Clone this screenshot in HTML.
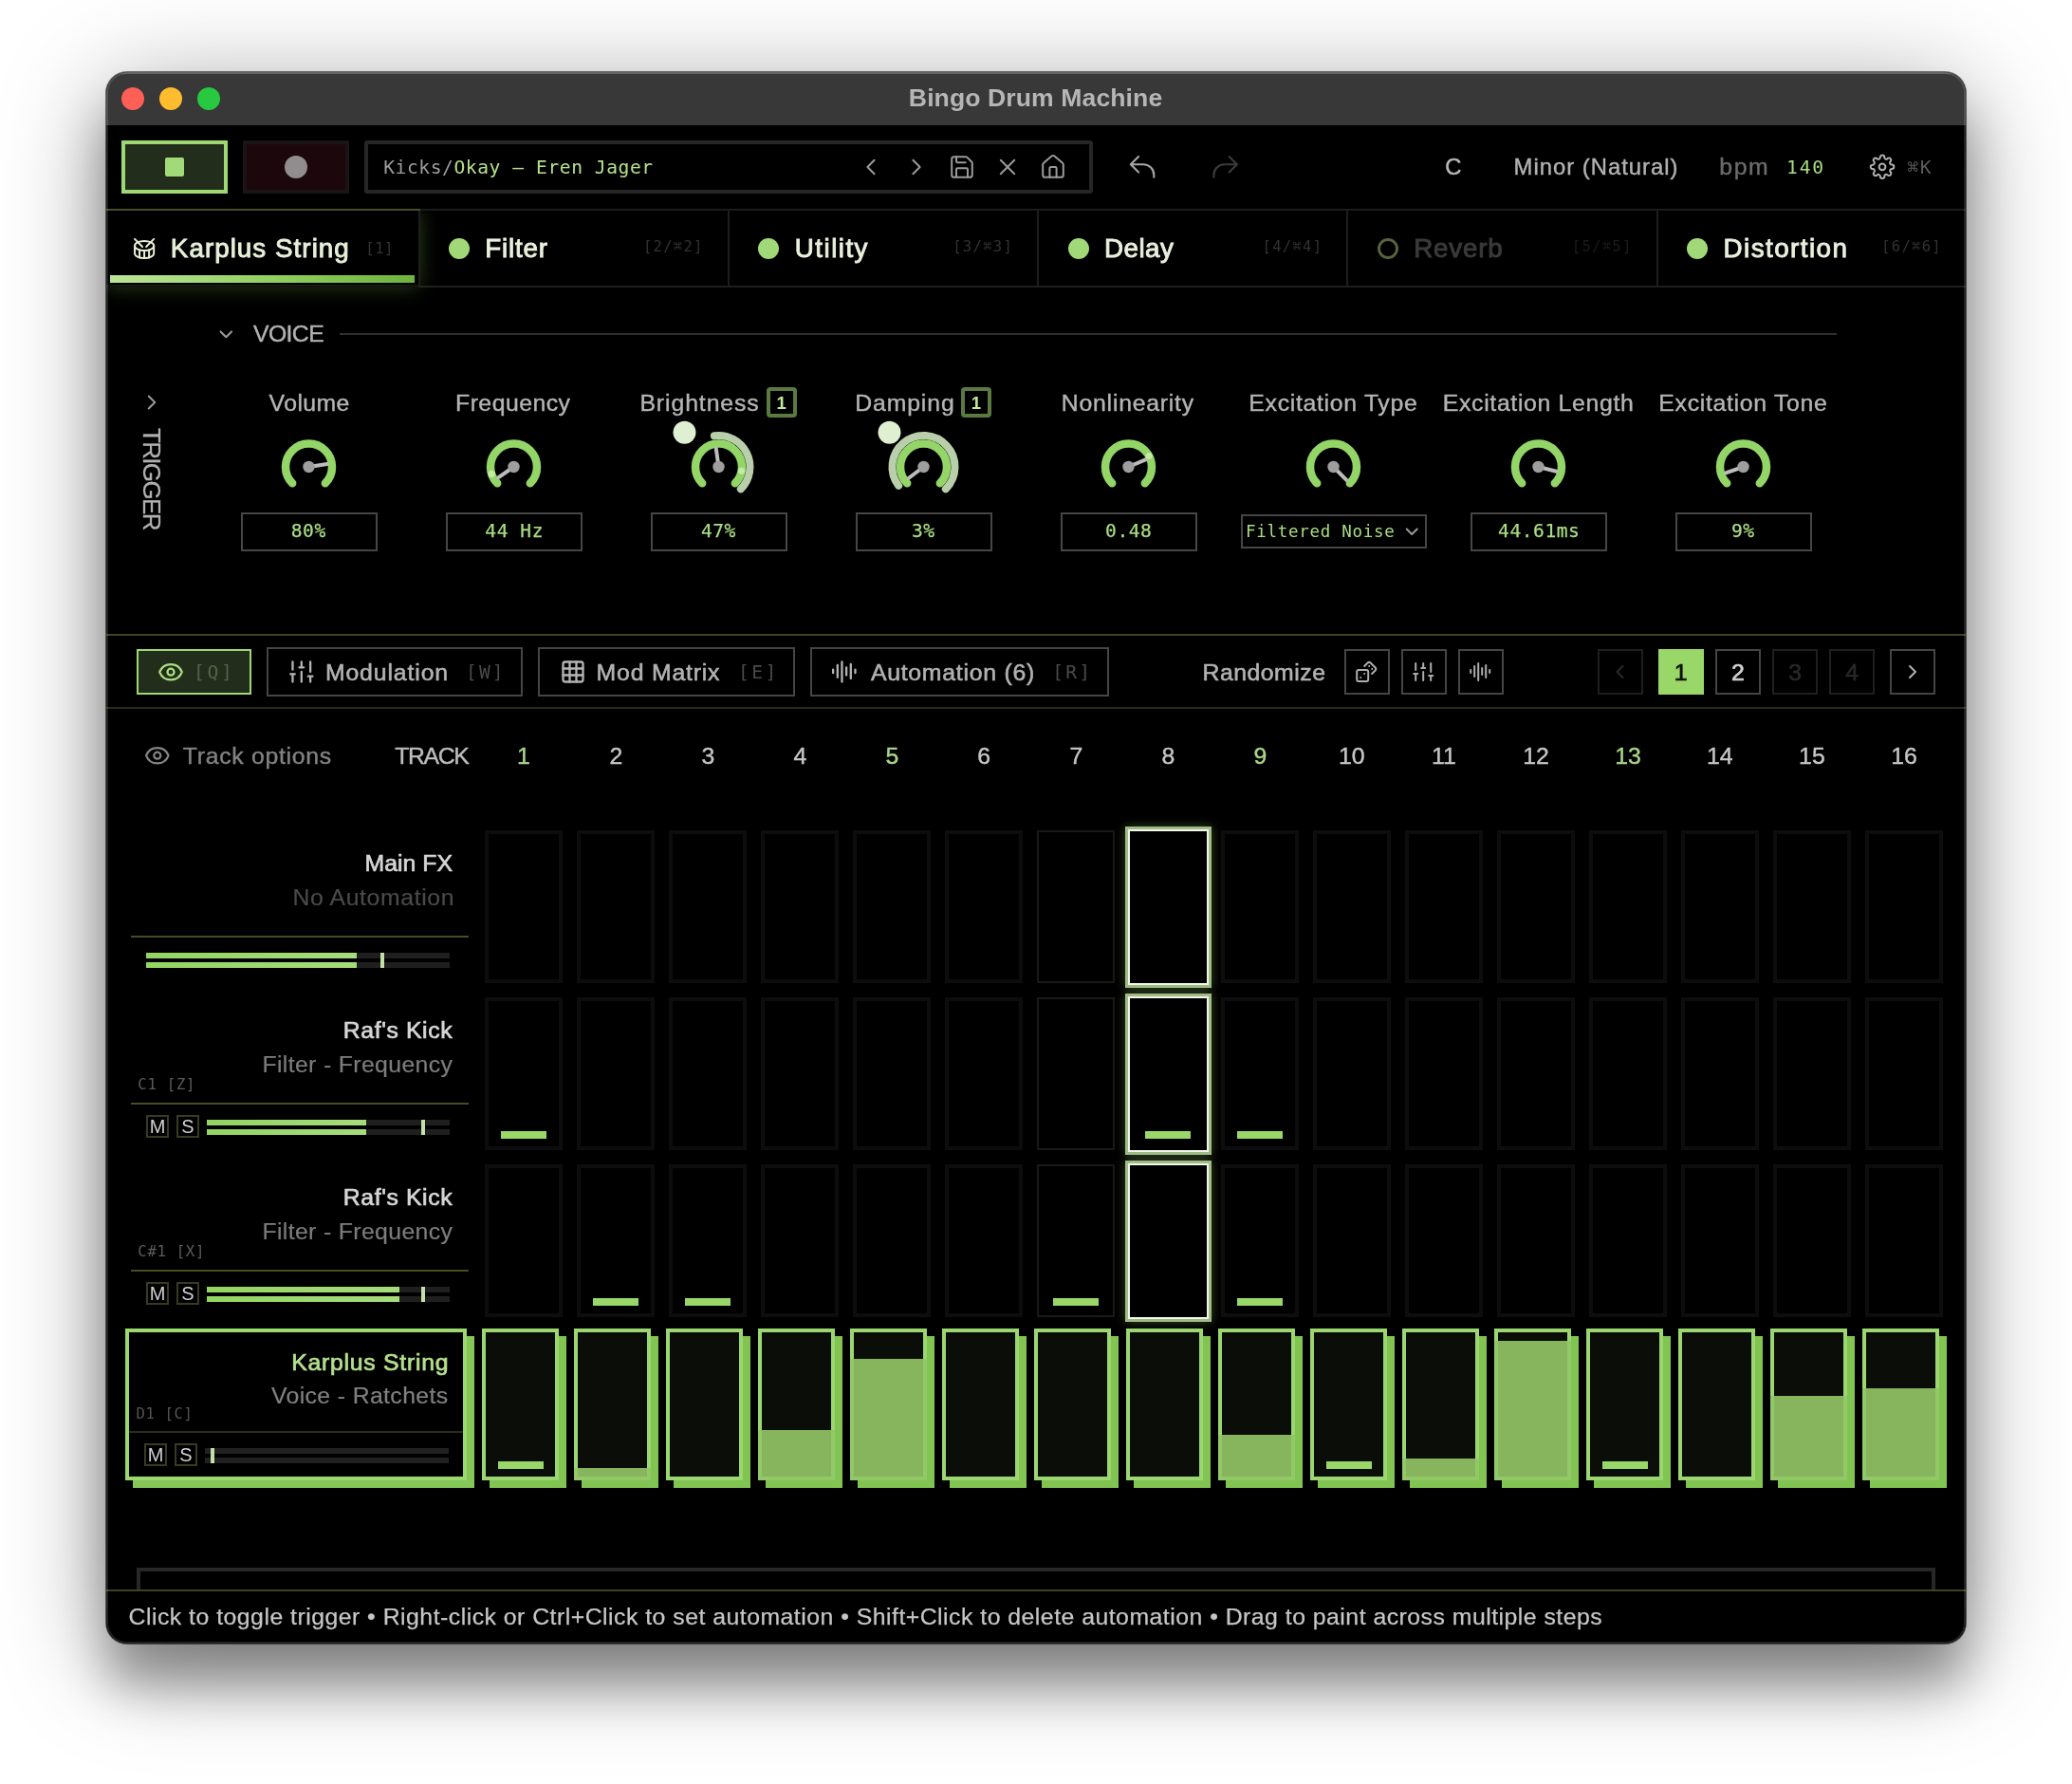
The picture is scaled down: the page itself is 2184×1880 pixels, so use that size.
<!DOCTYPE html>
<html lang="en"><head><meta charset="utf-8"><title>Bingo Drum Machine</title>
<style>
html,body{margin:0;padding:0;background:#fff;}
body{width:2184px;height:1880px;position:relative;overflow:hidden;}
#win{position:absolute;left:112px;top:76px;width:1960px;height:1656px;background:#000;border-radius:22px;box-shadow:0 0 0 1px rgba(0,0,0,.55),0 45px 50px rgba(0,0,0,.3),0 20px 110px rgba(0,0,0,.4);}
#clip{will-change:transform;position:absolute;left:0;top:0;width:1960px;height:1656px;border-radius:22px;overflow:hidden;}
#rim{position:absolute;left:0;top:0;width:1960px;height:1656px;border-radius:22px;box-shadow:inset 0 0 0 2px rgba(255,255,255,.13);pointer-events:none;}
.t{position:absolute;white-space:pre;margin:0;}
.b{position:absolute;}
svg.ov{position:absolute;left:0;top:0;}
</style></head>
<body>
<div id="win"><div id="clip">
<div class="b" style="left:0.00px;top:0.00px;width:1960.00px;height:56.00px;background:#383838;border-top:2px solid #4e4e4e;box-sizing:border-box;"></div>
<div class="b" style="left:16.00px;top:16.00px;width:24.00px;height:24.00px;background:#fe5f57;border-radius:50%;"></div>
<div class="b" style="left:56.00px;top:16.00px;width:24.00px;height:24.00px;background:#febc2e;border-radius:50%;"></div>
<div class="b" style="left:96.00px;top:16.00px;width:24.00px;height:24.00px;background:#28c840;border-radius:50%;"></div>
<div class="t" style='left:845.87px;top:14.00px;font:700 26.60px/26.60px "Liberation Sans",sans-serif;color:#b6b6b6;letter-spacing:0.082px;'>Bingo Drum Machine</div>
<div class="b" style="left:16.00px;top:72.00px;width:112.00px;height:56.00px;background:#232d1b;border:4px solid #9dd873;box-sizing:border-box;"></div>
<div class="b" style="left:62.00px;top:90.00px;width:20.00px;height:20.00px;background:#a3da79;border-radius:2px;"></div>
<div class="b" style="left:144.00px;top:72.00px;width:112.00px;height:56.00px;background:#1b070c;border:4px solid #1a1416;box-sizing:border-box;"></div>
<div class="b" style="left:188.00px;top:88.00px;width:24.00px;height:24.00px;background:#918d8f;border-radius:50%;"></div>
<div class="b" style="left:272.00px;top:72.00px;width:768.00px;height:56.00px;border:4px solid #262626;box-sizing:border-box;border-radius:3px;"></div>
<div class="t" style='left:292.23px;top:91.00px;font:400 19.60px/19.60px "DejaVu Sans Mono","Liberation Mono",monospace;color:#b5e18c;letter-spacing:0.573px;'><span style="color:#9c9c9c">Kicks/</span>Okay – Eren Jager</div>
<div class="t" style='left:1411.32px;top:88.00px;font:400 23.80px/23.80px "Liberation Sans",sans-serif;color:#b8b8b8;-webkit-text-stroke:0.42px #b8b8b8;'>C</div>
<div class="t" style='left:1483.61px;top:88.00px;font:400 23.80px/23.80px "Liberation Sans",sans-serif;color:#b2b2b2;letter-spacing:1.016px;-webkit-text-stroke:0.42px #b2b2b2;'>Minor (Natural)</div>
<div class="t" style='left:1700.26px;top:88.00px;font:400 24.80px/24.80px "Liberation Sans",sans-serif;color:#6c6c6c;letter-spacing:1.603px;-webkit-text-stroke:0.42px #6c6c6c;'>bpm</div>
<div class="t" style='left:1771.05px;top:91.00px;font:400 19.60px/19.60px "DejaVu Sans Mono","Liberation Mono",monospace;color:#a9dd82;letter-spacing:1.800px;'>140</div>
<div class="t" style='left:1898.26px;top:91.00px;font:400 19.60px/19.60px "DejaVu Sans Mono","Liberation Mono",monospace;color:#5c5c5c;letter-spacing:1.668px;'>⌘K</div>
<div class="b" style="left:0.00px;top:144.00px;width:1960.00px;height:2.00px;background:#1b1b1b;"></div>
<div class="b" style="left:0.00px;top:144.00px;width:330.50px;height:2.00px;background:#454e2f;"></div>
<div class="b" style="left:0.00px;top:224.50px;width:1960.00px;height:2.00px;background:#1d1d1d;"></div>
<div class="b" style="left:0.00px;top:146.00px;width:328.50px;height:78.00px;background:#000;box-shadow:0 1px 20px 0 rgba(135,205,85,.36);clip-path:inset(0 -80px -80px -80px);"></div>
<div class="b" style="left:0.00px;top:224.50px;width:328.50px;height:2.00px;background:#10140c;"></div>
<div class="b" style="left:328.50px;top:146.00px;width:2.00px;height:80.00px;background:#1d1d1d;"></div>
<div class="b" style="left:654.80px;top:146.00px;width:2.00px;height:80.00px;background:#1d1d1d;"></div>
<div class="b" style="left:981.10px;top:146.00px;width:2.00px;height:80.00px;background:#1d1d1d;"></div>
<div class="b" style="left:1307.40px;top:146.00px;width:2.00px;height:80.00px;background:#1d1d1d;"></div>
<div class="b" style="left:1633.70px;top:146.00px;width:2.00px;height:80.00px;background:#1d1d1d;"></div>
<div class="b" style="left:4.00px;top:214.00px;width:321.00px;height:8.00px;background:linear-gradient(90deg,#bde598,#8fcf5f 55%,#6db33e);"></div>
<div class="t" style='left:67.83px;top:172.00px;font:400 27.80px/27.80px "Liberation Sans",sans-serif;color:#e7f1da;letter-spacing:1.029px;-webkit-text-stroke:0.9px #e7f1da;'>Karplus String</div>
<div class="t" style='left:273.36px;top:179.00px;font:400 15.60px/15.60px "DejaVu Sans Mono","Liberation Mono",monospace;color:#343434;letter-spacing:0.479px;'>[1]</div>
<div class="b" style="left:361.10px;top:175.00px;width:22.00px;height:22.00px;background:#a1d979;border-radius:50%;"></div>
<div class="t" style='left:399.33px;top:172.00px;font:400 27.80px/27.80px "Liberation Sans",sans-serif;color:#e9f1de;letter-spacing:0.791px;-webkit-text-stroke:0.9px #e9f1de;'>Filter</div>
<div class="t" style='right:1330.25px;top:177.39px;font:400 15.60px/15.60px "DejaVu Sans Mono","Liberation Mono",monospace;color:#323232;letter-spacing:1.250px;'>[2/⌘2]</div>
<div class="b" style="left:687.40px;top:175.00px;width:22.00px;height:22.00px;background:#a1d979;border-radius:50%;"></div>
<div class="t" style='left:725.76px;top:172.00px;font:400 27.80px/27.80px "Liberation Sans",sans-serif;color:#e9f1de;letter-spacing:1.469px;-webkit-text-stroke:0.9px #e9f1de;'>Utility</div>
<div class="t" style='right:1003.95px;top:177.39px;font:400 15.60px/15.60px "DejaVu Sans Mono","Liberation Mono",monospace;color:#323232;letter-spacing:1.250px;'>[3/⌘3]</div>
<div class="b" style="left:1013.70px;top:175.00px;width:22.00px;height:22.00px;background:#a1d979;border-radius:50%;"></div>
<div class="t" style='left:1051.93px;top:172.00px;font:400 27.80px/27.80px "Liberation Sans",sans-serif;color:#e9f1de;letter-spacing:0.481px;-webkit-text-stroke:0.9px #e9f1de;'>Delay</div>
<div class="t" style='right:677.65px;top:177.39px;font:400 15.60px/15.60px "DejaVu Sans Mono","Liberation Mono",monospace;color:#323232;letter-spacing:1.250px;'>[4/⌘4]</div>
<div class="b" style="left:1340.00px;top:175.00px;width:22.00px;height:22.00px;border:3px solid #56633f;border-radius:50%;box-sizing:border-box;"></div>
<div class="t" style='left:1378.23px;top:172.00px;font:400 27.80px/27.80px "Liberation Sans",sans-serif;color:#3a3a3a;letter-spacing:0.770px;-webkit-text-stroke:0.9px #3a3a3a;filter:blur(0.6px);'>Reverb</div>
<div class="t" style='right:351.35px;top:177.39px;font:400 15.60px/15.60px "DejaVu Sans Mono","Liberation Mono",monospace;color:#1c1c1c;letter-spacing:1.250px;'>[5/⌘5]</div>
<div class="b" style="left:1666.30px;top:175.00px;width:22.00px;height:22.00px;background:#a1d979;border-radius:50%;"></div>
<div class="t" style='left:1704.53px;top:172.00px;font:400 27.80px/27.80px "Liberation Sans",sans-serif;color:#e9f1de;letter-spacing:1.453px;-webkit-text-stroke:0.9px #e9f1de;'>Distortion</div>
<div class="t" style='right:25.05px;top:177.39px;font:400 15.60px/15.60px "DejaVu Sans Mono","Liberation Mono",monospace;color:#323232;letter-spacing:1.250px;'>[6/⌘6]</div>
<div class="t" style='left:154.95px;top:264.00px;font:400 24.80px/24.80px "Liberation Sans",sans-serif;color:#b2b2b2;letter-spacing:-0.598px;-webkit-text-stroke:0.42px #b2b2b2;'>VOICE</div>
<div class="b" style="left:246.00px;top:275.00px;width:1578.00px;height:2.00px;background:#2f2f2f;"></div>
<div class="t" style='left:39.00px;top:375.28px;font:400 26.0px/26.0px "Liberation Sans",sans-serif;color:#b0b0b0;-webkit-text-stroke:0.3px #b0b0b0;letter-spacing:-1.673px;transform-origin:0 0;transform:rotate(90deg) translate(0,-22.01px);'>TRIGGER</div>
<div class="t" style='left:171.60px;top:337.00px;font:400 24.80px/24.80px "Liberation Sans",sans-serif;color:#b4b4b4;letter-spacing:0.418px;-webkit-text-stroke:0.42px #b4b4b4;'>Volume</div>
<div class="b" style="left:141.50px;top:463.50px;width:144.00px;height:41.00px;border:2px solid #464646;box-sizing:border-box;"></div>
<div class="t" style='left:194.78px;top:474.00px;font:400 19.60px/19.60px "DejaVu Sans Mono","Liberation Mono",monospace;color:#a9dd82;letter-spacing:0.541px;-webkit-text-stroke:0.25px #a9dd82;'>80%</div>
<div class="t" style='left:368.03px;top:337.00px;font:400 24.80px/24.80px "Liberation Sans",sans-serif;color:#b4b4b4;letter-spacing:0.473px;-webkit-text-stroke:0.42px #b4b4b4;'>Frequency</div>
<div class="b" style="left:357.50px;top:463.50px;width:144.00px;height:41.00px;border:2px solid #464646;box-sizing:border-box;"></div>
<div class="t" style='left:399.36px;top:474.00px;font:400 19.60px/19.60px "DejaVu Sans Mono","Liberation Mono",monospace;color:#a9dd82;letter-spacing:0.541px;-webkit-text-stroke:0.25px #a9dd82;'>44 Hz</div>
<div class="t" style='left:562.43px;top:337.00px;font:400 24.80px/24.80px "Liberation Sans",sans-serif;color:#b4b4b4;letter-spacing:0.906px;-webkit-text-stroke:0.42px #b4b4b4;'>Brightness</div>
<div class="b" style="left:696.10px;top:332.20px;width:31.50px;height:31.50px;border:4px solid #5b7a40;border-radius:4px;box-sizing:border-box;background:#000;"></div>
<div class="t" style='left:706.52px;top:340.00px;font:700 18.50px/18.50px "Liberation Sans",sans-serif;color:#c4e6a0;'>1</div>
<div class="b" style="left:573.50px;top:463.50px;width:144.00px;height:41.00px;border:2px solid #464646;box-sizing:border-box;"></div>
<div class="t" style='left:626.93px;top:474.00px;font:400 19.60px/19.60px "DejaVu Sans Mono","Liberation Mono",monospace;color:#a9dd82;letter-spacing:0.541px;-webkit-text-stroke:0.25px #a9dd82;'>47%</div>
<div class="t" style='left:789.23px;top:337.00px;font:400 24.80px/24.80px "Liberation Sans",sans-serif;color:#b4b4b4;letter-spacing:0.869px;-webkit-text-stroke:0.42px #b4b4b4;'>Damping</div>
<div class="b" style="left:901.30px;top:332.20px;width:31.50px;height:31.50px;border:4px solid #5b7a40;border-radius:4px;box-sizing:border-box;background:#000;"></div>
<div class="t" style='left:911.72px;top:340.00px;font:700 18.50px/18.50px "Liberation Sans",sans-serif;color:#c4e6a0;'>1</div>
<div class="b" style="left:789.50px;top:463.50px;width:144.00px;height:41.00px;border:2px solid #464646;box-sizing:border-box;"></div>
<div class="t" style='left:848.93px;top:474.00px;font:400 19.60px/19.60px "DejaVu Sans Mono","Liberation Mono",monospace;color:#a9dd82;letter-spacing:0.541px;-webkit-text-stroke:0.25px #a9dd82;'>3%</div>
<div class="t" style='left:1006.83px;top:337.00px;font:400 24.80px/24.80px "Liberation Sans",sans-serif;color:#b4b4b4;letter-spacing:0.765px;-webkit-text-stroke:0.42px #b4b4b4;'>Nonlinearity</div>
<div class="b" style="left:1005.50px;top:463.50px;width:144.00px;height:41.00px;border:2px solid #464646;box-sizing:border-box;"></div>
<div class="t" style='left:1053.10px;top:474.00px;font:400 19.60px/19.60px "DejaVu Sans Mono","Liberation Mono",monospace;color:#a9dd82;letter-spacing:0.541px;-webkit-text-stroke:0.25px #a9dd82;'>0.48</div>
<div class="t" style='left:1204.33px;top:337.00px;font:400 24.80px/24.80px "Liberation Sans",sans-serif;color:#b4b4b4;letter-spacing:0.693px;-webkit-text-stroke:0.42px #b4b4b4;'>Excitation Type</div>
<div class="t" style='left:1408.83px;top:337.00px;font:400 24.80px/24.80px "Liberation Sans",sans-serif;color:#b4b4b4;letter-spacing:0.669px;-webkit-text-stroke:0.42px #b4b4b4;'>Excitation Length</div>
<div class="b" style="left:1437.50px;top:463.50px;width:144.00px;height:41.00px;border:2px solid #464646;box-sizing:border-box;"></div>
<div class="t" style='left:1467.06px;top:474.00px;font:400 19.60px/19.60px "DejaVu Sans Mono","Liberation Mono",monospace;color:#a9dd82;letter-spacing:0.541px;-webkit-text-stroke:0.25px #a9dd82;'>44.61ms</div>
<div class="t" style='left:1636.33px;top:337.00px;font:400 24.80px/24.80px "Liberation Sans",sans-serif;color:#b4b4b4;letter-spacing:0.693px;-webkit-text-stroke:0.42px #b4b4b4;'>Excitation Tone</div>
<div class="b" style="left:1653.50px;top:463.50px;width:144.00px;height:41.00px;border:2px solid #464646;box-sizing:border-box;"></div>
<div class="t" style='left:1712.98px;top:474.00px;font:400 19.60px/19.60px "DejaVu Sans Mono","Liberation Mono",monospace;color:#a9dd82;letter-spacing:0.541px;-webkit-text-stroke:0.25px #a9dd82;'>9%</div>
<div class="b" style="left:1196.00px;top:466.00px;width:196.00px;height:36.00px;border:2px solid #464646;box-sizing:border-box;"></div>
<div class="t" style='left:1200.93px;top:476.00px;font:400 17.50px/17.50px "DejaVu Sans Mono","Liberation Mono",monospace;color:#a9dd82;letter-spacing:0.727px;'>Filtered Noise</div>
<div class="b" style="left:0.00px;top:592.00px;width:1960.00px;height:2.00px;background:#3a4521;"></div>
<div class="b" style="left:0.00px;top:669.00px;width:1960.00px;height:2.00px;background:#262e18;"></div>
<div class="b" style="left:32.00px;top:608.00px;width:121.00px;height:48.00px;background:#232d1b;border:2px solid #9dd873;box-sizing:border-box;"></div>
<div class="t" style='left:91.99px;top:623.00px;font:400 19.60px/19.60px "DejaVu Sans Mono","Liberation Mono",monospace;color:#56634a;letter-spacing:2.746px;'>[Q]</div>
<div class="b" style="left:169.00px;top:606.00px;width:270.00px;height:52.00px;border:2px solid #454545;box-sizing:border-box;"></div>
<div class="t" style='left:230.92px;top:621.00px;font:400 24.80px/24.80px "Liberation Sans",sans-serif;color:#b2b2b2;letter-spacing:0.874px;-webkit-text-stroke:0.6px #b2b2b2;'>Modulation</div>
<div class="t" style='left:378.99px;top:623.00px;font:400 19.60px/19.60px "DejaVu Sans Mono","Liberation Mono",monospace;color:#4a4a4a;letter-spacing:2.096px;'>[W]</div>
<div class="b" style="left:455.00px;top:606.00px;width:271.00px;height:52.00px;border:2px solid #454545;box-sizing:border-box;"></div>
<div class="t" style='left:516.62px;top:621.00px;font:400 24.80px/24.80px "Liberation Sans",sans-serif;color:#b2b2b2;letter-spacing:0.800px;-webkit-text-stroke:0.6px #b2b2b2;'>Mod Matrix</div>
<div class="t" style='left:666.09px;top:623.00px;font:400 19.60px/19.60px "DejaVu Sans Mono","Liberation Mono",monospace;color:#4a4a4a;letter-spacing:2.396px;'>[E]</div>
<div class="b" style="left:742.00px;top:606.00px;width:315.00px;height:52.00px;border:2px solid #454545;box-sizing:border-box;"></div>
<div class="t" style='left:805.90px;top:621.00px;font:400 24.80px/24.80px "Liberation Sans",sans-serif;color:#b2b2b2;letter-spacing:0.743px;-webkit-text-stroke:0.6px #b2b2b2;'>Automation (6)</div>
<div class="t" style='left:997.19px;top:623.00px;font:400 19.60px/19.60px "DejaVu Sans Mono","Liberation Mono",monospace;color:#4a4a4a;letter-spacing:2.296px;'>[R]</div>
<div class="t" style='left:1155.52px;top:621.00px;font:400 24.80px/24.80px "Liberation Sans",sans-serif;color:#b2b2b2;letter-spacing:0.502px;-webkit-text-stroke:0.6px #b2b2b2;'>Randomize</div>
<div class="b" style="left:1305.00px;top:608.00px;width:48.00px;height:48.00px;border:2px solid #454545;box-sizing:border-box;"></div>
<div class="b" style="left:1365.00px;top:608.00px;width:48.00px;height:48.00px;border:2px solid #454545;box-sizing:border-box;"></div>
<div class="b" style="left:1425.00px;top:608.00px;width:48.00px;height:48.00px;border:2px solid #454545;box-sizing:border-box;"></div>
<div class="b" style="left:1572.00px;top:608.00px;width:48.00px;height:48.00px;border:2px solid #1f1f1f;box-sizing:border-box;"></div>
<div class="b" style="left:1636.00px;top:608.00px;width:48.00px;height:48.00px;background:#98d768;"></div>
<div class="t" style='left:1652.78px;top:621.00px;font:400 24.80px/24.80px "Liberation Sans",sans-serif;color:#0c1208;-webkit-text-stroke:0.7px #0c1208;'>1</div>
<div class="b" style="left:1696.00px;top:608.00px;width:48.00px;height:48.00px;border:2px solid #454545;box-sizing:border-box;"></div>
<div class="t" style='left:1713.09px;top:621.00px;font:400 24.80px/24.80px "Liberation Sans",sans-serif;color:#d2d2d2;-webkit-text-stroke:0.7px #d2d2d2;'>2</div>
<div class="b" style="left:1756.00px;top:608.00px;width:48.00px;height:48.00px;border:2px solid #1f1f1f;box-sizing:border-box;"></div>
<div class="t" style='left:1773.18px;top:621.00px;font:400 24.80px/24.80px "Liberation Sans",sans-serif;color:#272727;-webkit-text-stroke:0.7px #272727;'>3</div>
<div class="b" style="left:1816.00px;top:608.00px;width:48.00px;height:48.00px;border:2px solid #1f1f1f;box-sizing:border-box;"></div>
<div class="t" style='left:1833.18px;top:621.00px;font:400 24.80px/24.80px "Liberation Sans",sans-serif;color:#272727;-webkit-text-stroke:0.7px #272727;'>4</div>
<div class="b" style="left:1880.00px;top:608.00px;width:48.00px;height:48.00px;border:2px solid #454545;box-sizing:border-box;"></div>
<div class="t" style='left:80.81px;top:709.00px;font:400 24.80px/24.80px "Liberation Sans",sans-serif;color:#828282;letter-spacing:0.693px;-webkit-text-stroke:0.42px #828282;'>Track options</div>
<div class="t" style='left:304.21px;top:709.00px;font:400 24.80px/24.80px "Liberation Sans",sans-serif;color:#bdbdbd;letter-spacing:-1.337px;-webkit-text-stroke:0.42px #bdbdbd;'>TRACK</div>
<div class="t" style='left:433.08px;top:709.00px;font:400 24.80px/24.80px "Liberation Sans",sans-serif;color:#a9d689;-webkit-text-stroke:0.42px #a9d689;'>1</div>
<div class="t" style='left:530.39px;top:709.00px;font:400 24.80px/24.80px "Liberation Sans",sans-serif;color:#c6c6c6;-webkit-text-stroke:0.42px #c6c6c6;'>2</div>
<div class="t" style='left:627.48px;top:709.00px;font:400 24.80px/24.80px "Liberation Sans",sans-serif;color:#c6c6c6;-webkit-text-stroke:0.42px #c6c6c6;'>3</div>
<div class="t" style='left:724.48px;top:709.00px;font:400 24.80px/24.80px "Liberation Sans",sans-serif;color:#c6c6c6;-webkit-text-stroke:0.42px #c6c6c6;'>4</div>
<div class="t" style='left:821.42px;top:709.00px;font:400 24.80px/24.80px "Liberation Sans",sans-serif;color:#a9d689;-webkit-text-stroke:0.42px #a9d689;'>5</div>
<div class="t" style='left:918.33px;top:709.00px;font:400 24.80px/24.80px "Liberation Sans",sans-serif;color:#c6c6c6;-webkit-text-stroke:0.42px #c6c6c6;'>6</div>
<div class="t" style='left:1015.39px;top:709.00px;font:400 24.80px/24.80px "Liberation Sans",sans-serif;color:#c6c6c6;-webkit-text-stroke:0.42px #c6c6c6;'>7</div>
<div class="t" style='left:1112.39px;top:709.00px;font:400 24.80px/24.80px "Liberation Sans",sans-serif;color:#c6c6c6;-webkit-text-stroke:0.42px #c6c6c6;'>8</div>
<div class="t" style='left:1209.42px;top:709.00px;font:400 24.80px/24.80px "Liberation Sans",sans-serif;color:#a9d689;-webkit-text-stroke:0.42px #a9d689;'>9</div>
<div class="t" style='left:1299.07px;top:709.00px;font:400 24.80px/24.80px "Liberation Sans",sans-serif;color:#c6c6c6;-webkit-text-stroke:0.42px #c6c6c6;'>10</div>
<div class="t" style='left:1397.09px;top:709.00px;font:400 24.80px/24.80px "Liberation Sans",sans-serif;color:#c6c6c6;-webkit-text-stroke:0.42px #c6c6c6;'>11</div>
<div class="t" style='left:1493.19px;top:709.00px;font:400 24.80px/24.80px "Liberation Sans",sans-serif;color:#c6c6c6;-webkit-text-stroke:0.42px #c6c6c6;'>12</div>
<div class="t" style='left:1590.13px;top:709.00px;font:400 24.80px/24.80px "Liberation Sans",sans-serif;color:#a9d689;-webkit-text-stroke:0.42px #a9d689;'>13</div>
<div class="t" style='left:1686.95px;top:709.00px;font:400 24.80px/24.80px "Liberation Sans",sans-serif;color:#c6c6c6;-webkit-text-stroke:0.42px #c6c6c6;'>14</div>
<div class="t" style='left:1784.10px;top:709.00px;font:400 24.80px/24.80px "Liberation Sans",sans-serif;color:#c6c6c6;-webkit-text-stroke:0.42px #c6c6c6;'>15</div>
<div class="t" style='left:1881.13px;top:709.00px;font:400 24.80px/24.80px "Liberation Sans",sans-serif;color:#c6c6c6;-webkit-text-stroke:0.42px #c6c6c6;'>16</div>
<div class="t" style='left:272.57px;top:822.00px;font:400 24.80px/24.80px "Liberation Sans",sans-serif;color:#d6d6d6;letter-spacing:0.033px;-webkit-text-stroke:0.7px #d6d6d6;'>Main FX</div>
<div class="t" style='left:196.52px;top:858.00px;font:400 24.80px/24.80px "Liberation Sans",sans-serif;color:#4a4a4a;letter-spacing:0.609px;-webkit-text-stroke:0.2px #4a4a4a;'>No Automation</div>
<div class="b" style="left:26.00px;top:910.00px;width:356.00px;height:2.00px;background:#454d22;"></div>
<div class="b" style="left:42.00px;top:928.00px;width:320.00px;height:6.00px;background:#1f1f1f;"></div>
<div class="b" style="left:42.00px;top:928.00px;width:222.20px;height:6.00px;background:linear-gradient(90deg,#92d562,#a6dc7b);"></div>
<div class="b" style="left:42.00px;top:938.00px;width:320.00px;height:6.00px;background:#1f1f1f;"></div>
<div class="b" style="left:42.00px;top:938.00px;width:222.20px;height:6.00px;background:linear-gradient(90deg,#92d562,#a6dc7b);"></div>
<div class="b" style="left:289.00px;top:928.00px;width:4.00px;height:16.00px;background:#c3e0a6;"></div>
<div class="b" style="left:399.30px;top:799.00px;width:82.00px;height:161.00px;border:4px solid #0d0d0d;box-sizing:border-box;"></div>
<div class="b" style="left:496.30px;top:799.00px;width:82.00px;height:161.00px;border:4px solid #0d0d0d;box-sizing:border-box;"></div>
<div class="b" style="left:593.30px;top:799.00px;width:82.00px;height:161.00px;border:4px solid #0d0d0d;box-sizing:border-box;"></div>
<div class="b" style="left:690.30px;top:799.00px;width:82.00px;height:161.00px;border:4px solid #0d0d0d;box-sizing:border-box;"></div>
<div class="b" style="left:787.30px;top:799.00px;width:82.00px;height:161.00px;border:4px solid #0d0d0d;box-sizing:border-box;"></div>
<div class="b" style="left:884.30px;top:799.00px;width:82.00px;height:161.00px;border:4px solid #0d0d0d;box-sizing:border-box;"></div>
<div class="b" style="left:981.30px;top:799.00px;width:82.00px;height:161.00px;border:2px solid #191a17;box-sizing:border-box;"></div>
<div class="b" style="left:1073.80px;top:795.00px;width:91.00px;height:170.00px;border:3px solid #a0bb86;box-sizing:border-box;box-shadow:inset 0 0 0 2px #f1f8ea,0 0 10px rgba(150,200,110,.35);background:#000;"></div>
<div class="b" style="left:1175.30px;top:799.00px;width:82.00px;height:161.00px;border:4px solid #0d0d0d;box-sizing:border-box;"></div>
<div class="b" style="left:1272.30px;top:799.00px;width:82.00px;height:161.00px;border:4px solid #0d0d0d;box-sizing:border-box;"></div>
<div class="b" style="left:1369.30px;top:799.00px;width:82.00px;height:161.00px;border:4px solid #0d0d0d;box-sizing:border-box;"></div>
<div class="b" style="left:1466.30px;top:799.00px;width:82.00px;height:161.00px;border:4px solid #0d0d0d;box-sizing:border-box;"></div>
<div class="b" style="left:1563.30px;top:799.00px;width:82.00px;height:161.00px;border:4px solid #0d0d0d;box-sizing:border-box;"></div>
<div class="b" style="left:1660.30px;top:799.00px;width:82.00px;height:161.00px;border:4px solid #0d0d0d;box-sizing:border-box;"></div>
<div class="b" style="left:1757.30px;top:799.00px;width:82.00px;height:161.00px;border:4px solid #0d0d0d;box-sizing:border-box;"></div>
<div class="b" style="left:1854.30px;top:799.00px;width:82.00px;height:161.00px;border:4px solid #0d0d0d;box-sizing:border-box;"></div>
<div class="t" style='left:249.87px;top:998.00px;font:400 24.80px/24.80px "Liberation Sans",sans-serif;color:#d6d6d6;letter-spacing:0.581px;-webkit-text-stroke:0.7px #d6d6d6;'>Raf's Kick</div>
<div class="t" style='left:164.42px;top:1034.00px;font:400 24.80px/24.80px "Liberation Sans",sans-serif;color:#7c7c7c;letter-spacing:0.363px;-webkit-text-stroke:0.2px #7c7c7c;'>Filter - Frequency</div>
<div class="b" style="left:26.00px;top:1086.00px;width:356.00px;height:2.00px;background:#454d22;"></div>
<div class="t" style='left:33.35px;top:1060.00px;font:400 15.60px/15.60px "DejaVu Sans Mono","Liberation Mono",monospace;color:#5c5c5c;letter-spacing:0.762px;'>C1 [Z]</div>
<div class="b" style="left:42.00px;top:1099.00px;width:24.00px;height:24.00px;border:2px solid #363c22;box-sizing:border-box;"></div>
<div class="t" style='left:45.68px;top:1101.00px;font:400 20.00px/20.00px "Liberation Sans",sans-serif;color:#cfcfcf;'>M</div>
<div class="b" style="left:74.00px;top:1099.00px;width:24.00px;height:24.00px;border:2px solid #363c22;box-sizing:border-box;"></div>
<div class="t" style='left:79.32px;top:1101.00px;font:400 20.00px/20.00px "Liberation Sans",sans-serif;color:#cfcfcf;'>S</div>
<div class="b" style="left:106.00px;top:1104.00px;width:256.00px;height:6.00px;background:#1f1f1f;"></div>
<div class="b" style="left:106.00px;top:1104.00px;width:168.00px;height:6.00px;background:linear-gradient(90deg,#92d562,#a6dc7b);"></div>
<div class="b" style="left:106.00px;top:1114.00px;width:256.00px;height:6.00px;background:#1f1f1f;"></div>
<div class="b" style="left:106.00px;top:1114.00px;width:168.00px;height:6.00px;background:linear-gradient(90deg,#92d562,#a6dc7b);"></div>
<div class="b" style="left:331.50px;top:1104.00px;width:4.00px;height:16.00px;background:#c3e0a6;"></div>
<div class="b" style="left:399.30px;top:975.00px;width:82.00px;height:161.00px;border:4px solid #0d0d0d;box-sizing:border-box;"></div>
<div class="b" style="left:416.30px;top:1116.00px;width:48.00px;height:8.00px;background:#98d768;"></div>
<div class="b" style="left:496.30px;top:975.00px;width:82.00px;height:161.00px;border:4px solid #0d0d0d;box-sizing:border-box;"></div>
<div class="b" style="left:593.30px;top:975.00px;width:82.00px;height:161.00px;border:4px solid #0d0d0d;box-sizing:border-box;"></div>
<div class="b" style="left:690.30px;top:975.00px;width:82.00px;height:161.00px;border:4px solid #0d0d0d;box-sizing:border-box;"></div>
<div class="b" style="left:787.30px;top:975.00px;width:82.00px;height:161.00px;border:4px solid #0d0d0d;box-sizing:border-box;"></div>
<div class="b" style="left:884.30px;top:975.00px;width:82.00px;height:161.00px;border:4px solid #0d0d0d;box-sizing:border-box;"></div>
<div class="b" style="left:981.30px;top:975.00px;width:82.00px;height:161.00px;border:2px solid #191a17;box-sizing:border-box;"></div>
<div class="b" style="left:1073.80px;top:971.00px;width:91.00px;height:170.00px;border:3px solid #a0bb86;box-sizing:border-box;box-shadow:inset 0 0 0 2px #f1f8ea,0 0 10px rgba(150,200,110,.35);background:#000;"></div>
<div class="b" style="left:1095.30px;top:1116.00px;width:48.00px;height:8.00px;background:#98d768;"></div>
<div class="b" style="left:1175.30px;top:975.00px;width:82.00px;height:161.00px;border:4px solid #0d0d0d;box-sizing:border-box;"></div>
<div class="b" style="left:1192.30px;top:1116.00px;width:48.00px;height:8.00px;background:#98d768;"></div>
<div class="b" style="left:1272.30px;top:975.00px;width:82.00px;height:161.00px;border:4px solid #0d0d0d;box-sizing:border-box;"></div>
<div class="b" style="left:1369.30px;top:975.00px;width:82.00px;height:161.00px;border:4px solid #0d0d0d;box-sizing:border-box;"></div>
<div class="b" style="left:1466.30px;top:975.00px;width:82.00px;height:161.00px;border:4px solid #0d0d0d;box-sizing:border-box;"></div>
<div class="b" style="left:1563.30px;top:975.00px;width:82.00px;height:161.00px;border:4px solid #0d0d0d;box-sizing:border-box;"></div>
<div class="b" style="left:1660.30px;top:975.00px;width:82.00px;height:161.00px;border:4px solid #0d0d0d;box-sizing:border-box;"></div>
<div class="b" style="left:1757.30px;top:975.00px;width:82.00px;height:161.00px;border:4px solid #0d0d0d;box-sizing:border-box;"></div>
<div class="b" style="left:1854.30px;top:975.00px;width:82.00px;height:161.00px;border:4px solid #0d0d0d;box-sizing:border-box;"></div>
<div class="t" style='left:249.87px;top:1174.00px;font:400 24.80px/24.80px "Liberation Sans",sans-serif;color:#d6d6d6;letter-spacing:0.581px;-webkit-text-stroke:0.7px #d6d6d6;'>Raf's Kick</div>
<div class="t" style='left:164.42px;top:1210.00px;font:400 24.80px/24.80px "Liberation Sans",sans-serif;color:#7c7c7c;letter-spacing:0.363px;-webkit-text-stroke:0.2px #7c7c7c;'>Filter - Frequency</div>
<div class="b" style="left:26.00px;top:1262.00px;width:356.00px;height:2.00px;background:#454d22;"></div>
<div class="t" style='left:33.35px;top:1236.00px;font:400 15.60px/15.60px "DejaVu Sans Mono","Liberation Mono",monospace;color:#5c5c5c;letter-spacing:0.718px;'>C#1 [X]</div>
<div class="b" style="left:42.00px;top:1275.00px;width:24.00px;height:24.00px;border:2px solid #363c22;box-sizing:border-box;"></div>
<div class="t" style='left:45.68px;top:1277.00px;font:400 20.00px/20.00px "Liberation Sans",sans-serif;color:#cfcfcf;'>M</div>
<div class="b" style="left:74.00px;top:1275.00px;width:24.00px;height:24.00px;border:2px solid #363c22;box-sizing:border-box;"></div>
<div class="t" style='left:79.32px;top:1277.00px;font:400 20.00px/20.00px "Liberation Sans",sans-serif;color:#cfcfcf;'>S</div>
<div class="b" style="left:106.00px;top:1280.00px;width:256.00px;height:6.00px;background:#1f1f1f;"></div>
<div class="b" style="left:106.00px;top:1280.00px;width:203.20px;height:6.00px;background:linear-gradient(90deg,#92d562,#a6dc7b);"></div>
<div class="b" style="left:106.00px;top:1290.00px;width:256.00px;height:6.00px;background:#1f1f1f;"></div>
<div class="b" style="left:106.00px;top:1290.00px;width:203.20px;height:6.00px;background:linear-gradient(90deg,#92d562,#a6dc7b);"></div>
<div class="b" style="left:331.50px;top:1280.00px;width:4.00px;height:16.00px;background:#c3e0a6;"></div>
<div class="b" style="left:399.30px;top:1151.00px;width:82.00px;height:161.00px;border:4px solid #0d0d0d;box-sizing:border-box;"></div>
<div class="b" style="left:496.30px;top:1151.00px;width:82.00px;height:161.00px;border:4px solid #0d0d0d;box-sizing:border-box;"></div>
<div class="b" style="left:513.30px;top:1292.00px;width:48.00px;height:8.00px;background:#98d768;"></div>
<div class="b" style="left:593.30px;top:1151.00px;width:82.00px;height:161.00px;border:4px solid #0d0d0d;box-sizing:border-box;"></div>
<div class="b" style="left:610.30px;top:1292.00px;width:48.00px;height:8.00px;background:#98d768;"></div>
<div class="b" style="left:690.30px;top:1151.00px;width:82.00px;height:161.00px;border:4px solid #0d0d0d;box-sizing:border-box;"></div>
<div class="b" style="left:787.30px;top:1151.00px;width:82.00px;height:161.00px;border:4px solid #0d0d0d;box-sizing:border-box;"></div>
<div class="b" style="left:884.30px;top:1151.00px;width:82.00px;height:161.00px;border:4px solid #0d0d0d;box-sizing:border-box;"></div>
<div class="b" style="left:981.30px;top:1151.00px;width:82.00px;height:161.00px;border:2px solid #191a17;box-sizing:border-box;"></div>
<div class="b" style="left:998.30px;top:1292.00px;width:48.00px;height:8.00px;background:#98d768;"></div>
<div class="b" style="left:1073.80px;top:1147.00px;width:91.00px;height:170.00px;border:3px solid #a0bb86;box-sizing:border-box;box-shadow:inset 0 0 0 2px #f1f8ea,0 0 10px rgba(150,200,110,.35);background:#000;"></div>
<div class="b" style="left:1175.30px;top:1151.00px;width:82.00px;height:161.00px;border:4px solid #0d0d0d;box-sizing:border-box;"></div>
<div class="b" style="left:1192.30px;top:1292.00px;width:48.00px;height:8.00px;background:#98d768;"></div>
<div class="b" style="left:1272.30px;top:1151.00px;width:82.00px;height:161.00px;border:4px solid #0d0d0d;box-sizing:border-box;"></div>
<div class="b" style="left:1369.30px;top:1151.00px;width:82.00px;height:161.00px;border:4px solid #0d0d0d;box-sizing:border-box;"></div>
<div class="b" style="left:1466.30px;top:1151.00px;width:82.00px;height:161.00px;border:4px solid #0d0d0d;box-sizing:border-box;"></div>
<div class="b" style="left:1563.30px;top:1151.00px;width:82.00px;height:161.00px;border:4px solid #0d0d0d;box-sizing:border-box;"></div>
<div class="b" style="left:1660.30px;top:1151.00px;width:82.00px;height:161.00px;border:4px solid #0d0d0d;box-sizing:border-box;"></div>
<div class="b" style="left:1757.30px;top:1151.00px;width:82.00px;height:161.00px;border:4px solid #0d0d0d;box-sizing:border-box;"></div>
<div class="b" style="left:1854.30px;top:1151.00px;width:82.00px;height:161.00px;border:4px solid #0d0d0d;box-sizing:border-box;"></div>
<div class="b" style="left:20.00px;top:1324.00px;width:360.00px;height:160.00px;border:4px solid #9bd86e;box-sizing:border-box;background:#000;box-shadow:8px 8px 0 #84c658;"></div>
<div class="t" style='left:195.17px;top:1348.00px;font:400 24.80px/24.80px "Liberation Sans",sans-serif;color:#b4e08e;letter-spacing:0.745px;-webkit-text-stroke:0.7px #b4e08e;'>Karplus String</div>
<div class="t" style='left:174.04px;top:1383.00px;font:400 24.80px/24.80px "Liberation Sans",sans-serif;color:#808080;letter-spacing:0.368px;-webkit-text-stroke:0.2px #808080;'>Voice - Ratchets</div>
<div class="t" style='left:31.49px;top:1407.00px;font:400 15.60px/15.60px "DejaVu Sans Mono","Liberation Mono",monospace;color:#555;letter-spacing:0.634px;'>D1 [C]</div>
<div class="b" style="left:24.00px;top:1432.00px;width:352.00px;height:2.00px;background:#2a311a;"></div>
<div class="b" style="left:40.00px;top:1445.00px;width:24.00px;height:24.00px;border:2px solid #363c22;box-sizing:border-box;"></div>
<div class="t" style='left:43.68px;top:1447.00px;font:400 20.00px/20.00px "Liberation Sans",sans-serif;color:#cfcfcf;'>M</div>
<div class="b" style="left:72.00px;top:1445.00px;width:24.00px;height:24.00px;border:2px solid #363c22;box-sizing:border-box;"></div>
<div class="t" style='left:77.32px;top:1447.00px;font:400 20.00px/20.00px "Liberation Sans",sans-serif;color:#cfcfcf;'>S</div>
<div class="b" style="left:104.00px;top:1450.00px;width:257.00px;height:6.00px;background:#212121;"></div>
<div class="b" style="left:104.00px;top:1460.00px;width:257.00px;height:6.00px;background:#212121;"></div>
<div class="b" style="left:110.00px;top:1450.00px;width:4.00px;height:16.00px;background:#c3e0a6;"></div>
<div class="b" style="left:396.00px;top:1324.00px;width:81.00px;height:160.00px;border:4px solid #9bd670;box-sizing:border-box;background:#0b0d08;box-shadow:8px 8px 0 #81c451;"><div style="position:absolute;left:13px;bottom:8px;width:48px;height:8px;background:#98d768;"></div></div>
<div class="b" style="left:493.00px;top:1324.00px;width:81.00px;height:160.00px;border:4px solid #9bd670;box-sizing:border-box;background:#0b0d08;box-shadow:8px 8px 0 #81c451;"><div style="position:absolute;left:-4px;right:-4px;bottom:-4px;height:13.0px;background:rgba(146,198,103,.91);"></div></div>
<div class="b" style="left:590.00px;top:1324.00px;width:81.00px;height:160.00px;border:4px solid #9bd670;box-sizing:border-box;background:#0b0d08;box-shadow:8px 8px 0 #81c451;"></div>
<div class="b" style="left:687.00px;top:1324.00px;width:81.00px;height:160.00px;border:4px solid #9bd670;box-sizing:border-box;background:#0b0d08;box-shadow:8px 8px 0 #81c451;"><div style="position:absolute;left:-4px;right:-4px;bottom:-4px;height:53.4px;background:rgba(146,198,103,.91);"></div></div>
<div class="b" style="left:784.00px;top:1324.00px;width:81.00px;height:160.00px;border:4px solid #9bd670;box-sizing:border-box;background:#0b0d08;box-shadow:8px 8px 0 #81c451;"><div style="position:absolute;left:-4px;right:-4px;bottom:-4px;height:128.0px;background:rgba(146,198,103,.91);"></div></div>
<div class="b" style="left:881.00px;top:1324.00px;width:81.00px;height:160.00px;border:4px solid #9bd670;box-sizing:border-box;background:#0b0d08;box-shadow:8px 8px 0 #81c451;"></div>
<div class="b" style="left:978.00px;top:1324.00px;width:81.00px;height:160.00px;border:4px solid #9bd670;box-sizing:border-box;background:#0b0d08;box-shadow:8px 8px 0 #81c451;"></div>
<div class="b" style="left:1075.00px;top:1324.00px;width:81.00px;height:160.00px;border:4px solid #9bd670;box-sizing:border-box;background:#0b0d08;box-shadow:8px 8px 0 #81c451;"></div>
<div class="b" style="left:1172.00px;top:1324.00px;width:81.00px;height:160.00px;border:4px solid #9bd670;box-sizing:border-box;background:#0b0d08;box-shadow:8px 8px 0 #81c451;"><div style="position:absolute;left:-4px;right:-4px;bottom:-4px;height:48.0px;background:rgba(146,198,103,.91);"></div></div>
<div class="b" style="left:1269.00px;top:1324.00px;width:81.00px;height:160.00px;border:4px solid #9bd670;box-sizing:border-box;background:#0b0d08;box-shadow:8px 8px 0 #81c451;"><div style="position:absolute;left:13px;bottom:8px;width:48px;height:8px;background:#98d768;"></div></div>
<div class="b" style="left:1366.00px;top:1324.00px;width:81.00px;height:160.00px;border:4px solid #9bd670;box-sizing:border-box;background:#0b0d08;box-shadow:8px 8px 0 #81c451;"><div style="position:absolute;left:-4px;right:-4px;bottom:-4px;height:22.7px;background:rgba(146,198,103,.91);"></div></div>
<div class="b" style="left:1463.00px;top:1324.00px;width:81.00px;height:160.00px;border:4px solid #9bd670;box-sizing:border-box;background:#0b0d08;box-shadow:8px 8px 0 #81c451;"><div style="position:absolute;left:-4px;right:-4px;bottom:-4px;height:147.0px;background:rgba(146,198,103,.91);"></div></div>
<div class="b" style="left:1560.00px;top:1324.00px;width:81.00px;height:160.00px;border:4px solid #9bd670;box-sizing:border-box;background:#0b0d08;box-shadow:8px 8px 0 #81c451;"><div style="position:absolute;left:13px;bottom:8px;width:48px;height:8px;background:#98d768;"></div></div>
<div class="b" style="left:1657.00px;top:1324.00px;width:81.00px;height:160.00px;border:4px solid #9bd670;box-sizing:border-box;background:#0b0d08;box-shadow:8px 8px 0 #81c451;"></div>
<div class="b" style="left:1754.00px;top:1324.00px;width:81.00px;height:160.00px;border:4px solid #9bd670;box-sizing:border-box;background:#0b0d08;box-shadow:8px 8px 0 #81c451;"><div style="position:absolute;left:-4px;right:-4px;bottom:-4px;height:89.2px;background:rgba(146,198,103,.91);"></div></div>
<div class="b" style="left:1851.00px;top:1324.00px;width:81.00px;height:160.00px;border:4px solid #9bd670;box-sizing:border-box;background:#0b0d08;box-shadow:8px 8px 0 #81c451;"><div style="position:absolute;left:-4px;right:-4px;bottom:-4px;height:97.5px;background:rgba(146,198,103,.91);"></div></div>
<div class="b" style="left:32.00px;top:1576.00px;width:1896.00px;height:40.00px;border:4px solid #272727;box-sizing:border-box;"></div>
<div class="b" style="left:0.00px;top:1599.00px;width:1960.00px;height:57.00px;background:#000;border-top:2px solid #3a4521;box-sizing:border-box;"></div>
<div class="t" style='left:23.58px;top:1616.00px;font:400 24.80px/24.80px "Liberation Sans",sans-serif;color:#c6c6c6;letter-spacing:0.489px;-webkit-text-stroke:0.25px #c6c6c6;'>Click to toggle trigger • Right-click or Ctrl+Click to set automation • Shift+Click to delete automation • Drag to paint across multiple steps</div>
<svg class="ov" width="1960" height="1656" viewBox="0 0 1960 1656">
<g transform="translate(791.60 85.60) scale(1.2000)" fill="none" stroke="#9a9a9a" stroke-width="1.667" stroke-linecap="round" stroke-linejoin="round" ><path d="m15 18-6-6 6-6"/></g>
<g transform="translate(839.60 85.60) scale(1.2000)" fill="none" stroke="#9a9a9a" stroke-width="1.667" stroke-linecap="round" stroke-linejoin="round" ><path d="m9 18 6-6-6-6"/></g>
<g transform="translate(887.60 85.60) scale(1.2000)" fill="none" stroke="#9a9a9a" stroke-width="1.667" stroke-linecap="round" stroke-linejoin="round" ><path d="M15.2 3a2 2 0 0 1 1.4.6l3.8 3.8a2 2 0 0 1 .6 1.4V19a2 2 0 0 1-2 2H5a2 2 0 0 1-2-2V5a2 2 0 0 1 2-2z"/><path d="M17 21v-7a1 1 0 0 0-1-1H8a1 1 0 0 0-1 1v7"/><path d="M7 3v4a1 1 0 0 0 1 1h7"/></g>
<g transform="translate(935.60 85.60) scale(1.2000)" fill="none" stroke="#9a9a9a" stroke-width="1.667" stroke-linecap="round" stroke-linejoin="round" ><path d="M18 6 6 18"/><path d="m6 6 12 12"/></g>
<g transform="translate(983.60 85.60) scale(1.2000)" fill="none" stroke="#9a9a9a" stroke-width="1.667" stroke-linecap="round" stroke-linejoin="round" ><path d="M15 21v-8a1 1 0 0 0-1-1h-4a1 1 0 0 0-1 1v8"/><path d="M3 10a2 2 0 0 1 .709-1.528l7-5.999a2 2 0 0 1 2.582 0l7 5.999A2 2 0 0 1 21 10v9a2 2 0 0 1-2 2H5a2 2 0 0 1-2-2z"/></g>
<path d="M1088.10 89.00 L1079.80 97.30 L1088.10 105.60 M1079.80 97.30 H1093.30 A11 11 0 0 1 1104.30 108.30 V110.80" fill="none" stroke="#a6a6a6" stroke-width="2.1" stroke-linecap="round" stroke-linejoin="round"/>
<path d="M1183.60 89.00 L1191.90 97.30 L1183.60 105.60 M1191.90 97.30 H1178.40 A11 11 0 0 0 1167.40 108.30 V110.80" fill="none" stroke="#3c3c3c" stroke-width="2.1" stroke-linecap="round" stroke-linejoin="round"/>
<g transform="translate(1858.60 86.40) scale(1.1167)" fill="none" stroke="#b0b0b0" stroke-width="1.791" stroke-linecap="round" stroke-linejoin="round" ><circle cx="12" cy="12" r="3"/><path d="M19.4 15a1.65 1.65 0 0 0 .33 1.82l.06.06a2 2 0 0 1 0 2.83 2 2 0 0 1-2.83 0l-.06-.06a1.65 1.65 0 0 0-1.82-.33 1.65 1.65 0 0 0-1 1.51V21a2 2 0 0 1-2 2 2 2 0 0 1-2-2v-.09A1.65 1.65 0 0 0 9 19.4a1.65 1.65 0 0 0-1.82.33l-.06.06a2 2 0 0 1-2.83 0 2 2 0 0 1 0-2.83l.06-.06a1.65 1.65 0 0 0 .33-1.82 1.65 1.65 0 0 0-1.51-1H3a2 2 0 0 1-2-2 2 2 0 0 1 2-2h.09A1.65 1.65 0 0 0 4.6 9a1.65 1.65 0 0 0-.33-1.82l-.06-.06a2 2 0 0 1 0-2.83 2 2 0 0 1 2.83 0l.06.06a1.65 1.65 0 0 0 1.82.33H9a1.65 1.65 0 0 0 1-1.51V3a2 2 0 0 1 2-2 2 2 0 0 1 2 2v.09a1.65 1.65 0 0 0 1 1.51 1.65 1.65 0 0 0 1.82-.33l.06-.06a2 2 0 0 1 2.83 0 2 2 0 0 1 0 2.83l-.06.06a1.65 1.65 0 0 0-.33 1.82V9a1.65 1.65 0 0 0 1.51 1H21a2 2 0 0 1 2 2 2 2 0 0 1-2 2h-.09a1.65 1.65 0 0 0-1.51 1z"/></g>
<g transform="translate(28.00 173.90) scale(1.0083)" fill="none" stroke="#e6f0d8" stroke-width="1.983" stroke-linecap="round" stroke-linejoin="round" ><path d="m2 2 8 8"/><path d="m22 2-8 8"/><ellipse cx="12" cy="9" rx="10" ry="5"/><path d="M7 13.4v7.9"/><path d="M12 14v8"/><path d="M17 13.4v7.9"/><path d="M2 9v8a10 5 0 0 0 20 0V9"/></g>
<g transform="translate(114.80 264.80) scale(0.9583)" fill="none" stroke="#9a9a9a" stroke-width="2.087" stroke-linecap="round" stroke-linejoin="round" ><path d="m6 9 6 6 6-6"/></g>
<g transform="translate(35.00 335.00) scale(1.0833)" fill="none" stroke="#9a9a9a" stroke-width="1.846" stroke-linecap="round" stroke-linejoin="round" ><path d="m9 18 6-6-6-6"/></g>
<path d="M196.18 433.32 A24.5 24.5 0 1 1 230.82 433.32" fill="none" stroke="#93d566" stroke-width="8.5" stroke-linecap="round" opacity="1"/>
<path d="M213.50 416.00 L232.76 412.95" stroke="#bcbcbc" stroke-width="4" stroke-linecap="round"/>
<circle cx="213.50" cy="416.00" r="6.2" fill="#9e9e9e"/>
<path d="M412.18 433.32 A24.5 24.5 0 1 1 446.82 433.32" fill="none" stroke="#93d566" stroke-width="8.5" stroke-linecap="round" opacity="1"/>
<path d="M429.50 416.00 L413.43 427.04" stroke="#bcbcbc" stroke-width="4" stroke-linecap="round"/>
<circle cx="429.50" cy="416.00" r="6.2" fill="#9e9e9e"/>
<path d="M640.91 383.32 A33 33 0 0 1 668.83 439.33" fill="none" stroke="#c9dfb8" stroke-width="8" stroke-linecap="round" opacity="0.92"/>
<circle cx="609.50" cy="379.70" r="12" fill="#def0d1"/>
<path d="M628.18 433.32 A24.5 24.5 0 1 1 662.82 433.32" fill="none" stroke="#93d566" stroke-width="8.5" stroke-linecap="round" opacity="1"/>
<path d="M645.50 416.00 L642.79 396.69" stroke="#bcbcbc" stroke-width="4" stroke-linecap="round"/>
<circle cx="645.50" cy="416.00" r="6.2" fill="#9e9e9e"/>
<path d="M835.15 435.86 A33 33 0 1 1 884.83 439.33" fill="none" stroke="#c9dfb8" stroke-width="8" stroke-linecap="round" opacity="0.92"/>
<circle cx="825.50" cy="379.70" r="12" fill="#def0d1"/>
<path d="M844.18 433.32 A24.5 24.5 0 1 1 878.82 433.32" fill="none" stroke="#93d566" stroke-width="8.5" stroke-linecap="round" opacity="1"/>
<path d="M861.50 416.00 L845.93 427.74" stroke="#bcbcbc" stroke-width="4" stroke-linecap="round"/>
<circle cx="861.50" cy="416.00" r="6.2" fill="#9e9e9e"/>
<path d="M1060.18 433.32 A24.5 24.5 0 1 1 1094.82 433.32" fill="none" stroke="#93d566" stroke-width="8.5" stroke-linecap="round" opacity="1"/>
<path d="M1077.50 416.00 L1095.45 408.38" stroke="#bcbcbc" stroke-width="4" stroke-linecap="round"/>
<circle cx="1077.50" cy="416.00" r="6.2" fill="#9e9e9e"/>
<path d="M1276.18 433.32 A24.5 24.5 0 1 1 1310.82 433.32" fill="none" stroke="#93d566" stroke-width="8.5" stroke-linecap="round" opacity="1"/>
<path d="M1293.50 416.00 L1307.29 429.79" stroke="#bcbcbc" stroke-width="4" stroke-linecap="round"/>
<circle cx="1293.50" cy="416.00" r="6.2" fill="#9e9e9e"/>
<path d="M1492.18 433.32 A24.5 24.5 0 1 1 1526.82 433.32" fill="none" stroke="#93d566" stroke-width="8.5" stroke-linecap="round" opacity="1"/>
<path d="M1509.50 416.00 L1528.42 420.72" stroke="#bcbcbc" stroke-width="4" stroke-linecap="round"/>
<circle cx="1509.50" cy="416.00" r="6.2" fill="#9e9e9e"/>
<path d="M1708.18 433.32 A24.5 24.5 0 1 1 1742.82 433.32" fill="none" stroke="#93d566" stroke-width="8.5" stroke-linecap="round" opacity="1"/>
<path d="M1725.50 416.00 L1707.06 422.35" stroke="#bcbcbc" stroke-width="4" stroke-linecap="round"/>
<circle cx="1725.50" cy="416.00" r="6.2" fill="#9e9e9e"/>
<circle cx="406.15" cy="423.41" r="3.6" fill="#cdeeb0" opacity=".85"/>
<circle cx="669.63" cy="420.25" r="3.6" fill="#cdeeb0" opacity=".85"/>
<circle cx="1099.13" cy="404.50" r="3.6" fill="#cdeeb0" opacity=".85"/>
<g transform="translate(1365.20 473.30) scale(0.9167)" fill="none" stroke="#9a9a9a" stroke-width="2.182" stroke-linecap="round" stroke-linejoin="round" ><path d="m6 9 6 6 6-6"/></g>
<g transform="translate(54.00 618.20) scale(1.1667)" fill="none" stroke="#a8de80" stroke-width="1.971" stroke-linecap="round" stroke-linejoin="round" ><path d="M2.062 12.348a1 1 0 0 1 0-.696 10.75 10.75 0 0 1 19.876 0 1 1 0 0 1 0 .696 10.75 10.75 0 0 1-19.876 0"/><circle cx="12" cy="12" r="3"/></g>
<g transform="translate(191.80 618.00) scale(1.1667)" fill="none" stroke="#b4b4b4" stroke-width="1.971" stroke-linecap="round" stroke-linejoin="round" ><path d="M4 21v-7M4 10V3M12 21v-9M12 8V3M20 21v-5M20 12V3M2 14h4M10 8h4M18 16h4"/></g>
<g transform="translate(478.00 618.00) scale(1.1667)" fill="none" stroke="#b4b4b4" stroke-width="1.971" stroke-linecap="round" stroke-linejoin="round" ><rect width="18" height="18" x="3" y="3" rx="2"/><path d="M3 9h18M3 15h18M9 3v18M15 3v18"/></g>
<g transform="translate(763.80 618.00) scale(1.1667)" fill="none" stroke="#b4b4b4" stroke-width="1.971" stroke-linecap="round" stroke-linejoin="round" ><path d="M2 10v3M6 6v11M10 3v18M14 8v7M18 5v13M22 10v3"/></g>
<g transform="translate(1316.20 620.00) scale(1.0000)" fill="none" stroke="#adadad" stroke-width="2.000" stroke-linecap="round" stroke-linejoin="round" ><rect width="12" height="12" x="2" y="10" rx="2" ry="2"/><path d="m17.92 14 3.5-3.5a2.24 2.24 0 0 0 0-3l-5-4.92a2.24 2.24 0 0 0-3 0L10 6"/><path d="M6 18h.01M10 14h.01M15 6h.01M18 9h.01"/></g>
<g transform="translate(1376.20 620.00) scale(1.0000)" fill="none" stroke="#adadad" stroke-width="2.000" stroke-linecap="round" stroke-linejoin="round" ><path d="M4 21v-7M4 10V3M12 21v-9M12 8V3M20 21v-5M20 12V3M2 14h4M10 8h4M18 16h4"/></g>
<g transform="translate(1436.20 620.00) scale(1.0000)" fill="none" stroke="#adadad" stroke-width="2.000" stroke-linecap="round" stroke-linejoin="round" ><path d="M2 10v3M6 6v11M10 3v18M14 8v7M18 5v13M22 10v3"/></g>
<g transform="translate(1583.50 620.00) scale(1.0000)" fill="none" stroke="#2a2a2a" stroke-width="2.000" stroke-linecap="round" stroke-linejoin="round" ><path d="m15 18-6-6 6-6"/></g>
<g transform="translate(1892.00 620.00) scale(1.0000)" fill="none" stroke="#b0b0b0" stroke-width="2.000" stroke-linecap="round" stroke-linejoin="round" ><path d="m9 18 6-6-6-6"/></g>
<g transform="translate(39.80 706.20) scale(1.1667)" fill="none" stroke="#858585" stroke-width="1.886" stroke-linecap="round" stroke-linejoin="round" ><path d="M2.062 12.348a1 1 0 0 1 0-.696 10.75 10.75 0 0 1 19.876 0 1 1 0 0 1 0 .696 10.75 10.75 0 0 1-19.876 0"/><circle cx="12" cy="12" r="3"/></g>
</svg>
</div><div id="rim"></div></div>
</body></html>
